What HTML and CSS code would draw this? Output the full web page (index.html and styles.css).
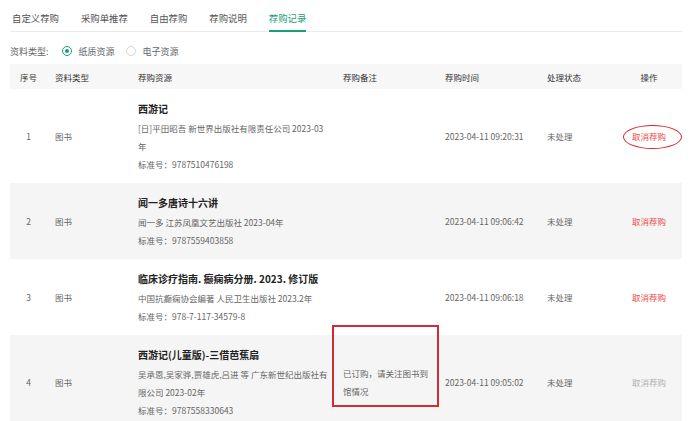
FILE: index.html
```html
<!DOCTYPE html>
<html lang="zh-CN">
<head>
<meta charset="utf-8">
<title>荐购记录</title>
<link rel="stylesheet" href="styles.css">
</head>
<body>
<div class="page">
  <div class="tabs">
    <div class="tab">自定义荐购</div>
    <div class="tab">采购单推荐</div>
    <div class="tab">自由荐购</div>
    <div class="tab">荐购说明</div>
    <div class="tab active">荐购记录</div>
  </div>
  <div class="filter">
    <span class="flabel">资料类型:</span>
    <span class="radio checked"></span><span class="rtext">纸质资源</span>
    <span class="radio"></span><span class="rtext">电子资源</span>
  </div>
  <table class="grid">
    <colgroup>
      <col class="c1"><col class="c2"><col class="c3"><col class="c4"><col class="c5"><col class="c6"><col class="c7">
    </colgroup>
    <thead>
      <tr><th class="center">序号</th><th>资料类型</th><th>荐购资源</th><th>荐购备注</th><th>荐购时间</th><th>处理状态</th><th class="center">操作</th></tr>
    </thead>
    <tbody>
      <tr>
        <td class="center">1</td><td>图书</td>
        <td class="res"><div class="title">西游记</div><div class="line"><span class="nw">[日]平田昭吾 新世界出版社有限责任公司 2023-03</span><br>年</div><div class="line">标准号：9787510476198</div></td>
        <td></td><td>2023-04-11 09:20:31</td><td>未处理</td><td class="center"><span class="cancel">取消荐购</span></td>
      </tr>
      <tr class="alt">
        <td class="center">2</td><td>图书</td>
        <td class="res"><div class="title">闻一多唐诗十六讲</div><div class="line">闻一多 江苏凤凰文艺出版社 2023-04年</div><div class="line">标准号：9787559403858</div></td>
        <td></td><td>2023-04-11 09:06:42</td><td>未处理</td><td class="center"><span class="cancel">取消荐购</span></td>
      </tr>
      <tr>
        <td class="center">3</td><td>图书</td>
        <td class="res"><div class="title">临床诊疗指南. 癫痫病分册. 2023. 修订版</div><div class="line">中国抗癫痫协会编著 人民卫生出版社 2023.2年</div><div class="line">标准号：978-7-117-34579-8</div></td>
        <td></td><td>2023-04-11 09:06:18</td><td>未处理</td><td class="center"><span class="cancel">取消荐购</span></td>
      </tr>
      <tr class="alt">
        <td class="center">4</td><td>图书</td>
        <td class="res"><div class="title">西游记(儿童版)-三借芭蕉扇</div><div class="line"><span class="nw">吴承恩,吴家骅,贾雄虎,吕进 等 广东新世纪出版社有</span><br>限公司 2023-02年</div><div class="line">标准号：9787558330643</div></td>
        <td class="note">已订购，请关注图书到馆情况</td><td>2023-04-11 09:05:02</td><td>未处理</td><td class="center"><span class="cancel disabled">取消荐购</span></td>
      </tr>
    </tbody>
  </table>
  <div class="mark-ellipse"></div>
  <div class="mark-rect"></div>
</div>
</body>
</html>
```

FILE: styles.css
```css
html, body {
  margin: 0;
  padding: 0;
  background: #ffffff;
}
body {
  font-family: "Noto Sans CJK SC", "Noto Sans", sans-serif;
  color: #666;
  overflow: hidden;
}
.page {
  position: relative;
  width: 672px;
  padding-left: 10px;
}
.tabs {
  display: flex;
  gap: 22px;
  padding: 9px 0 0 2px;
  border-bottom: 1px solid #ebebeb;
}
.tab {
  font-size: 9.4px;
  line-height: 18px;
  color: #555;
  padding-bottom: 3px;
  border-bottom: 2px solid transparent;
  margin-bottom: -1px;
}
.tab.active {
  color: #1a9e78;
  border-bottom-color: #1a9e78;
}
.filter {
  display: flex;
  align-items: center;
  height: 14px;
  margin: 12px 0 6px 0;
  font-size: 9px;
  color: #666;
}
.flabel {
  margin-right: 13px;
}
.radio {
  width: 8px;
  height: 8px;
  border: 1px solid #d6d6d6;
  border-radius: 50%;
  margin-right: 7px;
  position: relative;
}
.radio.checked {
  border-color: #1a9e78;
}
.radio.checked::after {
  content: "";
  position: absolute;
  left: 2px;
  top: 2px;
  width: 4px;
  height: 4px;
  border-radius: 50%;
  background: #1a9e78;
}
.rtext {
  margin-right: 11px;
}
.grid {
  width: 672px;
  border-collapse: collapse;
  table-layout: fixed;
  font-size: 8.5px;
}
.c1 { width: 37px; }
.c2 { width: 83px; }
.c3 { width: 205px; }
.c4 { width: 102px; }
.c5 { width: 102px; }
.c6 { width: 77px; }
.c7 { width: 66px; }
.grid th {
  background: #f7f7f7;
  height: 25px;
  padding: 0 8px;
  text-align: left;
  font-weight: normal;
  color: #333;
}
.grid td {
  padding: 10px 8px;
  vertical-align: middle;
  line-height: 18px;
  color: #666;
}
.grid td.res {
  padding-right: 2px;
}
.nw {
  white-space: nowrap;
}
.grid tr.alt td {
  background: #f5f5f5;
}
.grid .center {
  text-align: center;
}
.title {
  font-size: 10px;
  font-weight: bold;
  color: #222;
  line-height: 20px;
}
.line {
  line-height: 18px;
}
.note {
  line-height: 19px;
}
.cancel {
  color: #ef4a4a;
}
.cancel.disabled {
  color: #b0b0b0;
}
.mark-ellipse {
  position: absolute;
  left: 623px;
  top: 125px;
  width: 57px;
  height: 22px;
  border: 1.5px solid #d9262c;
  border-radius: 50%;
}
.mark-rect {
  position: absolute;
  left: 332px;
  top: 325px;
  width: 103px;
  height: 78px;
  border: 2px solid #d42a33;
}
```
